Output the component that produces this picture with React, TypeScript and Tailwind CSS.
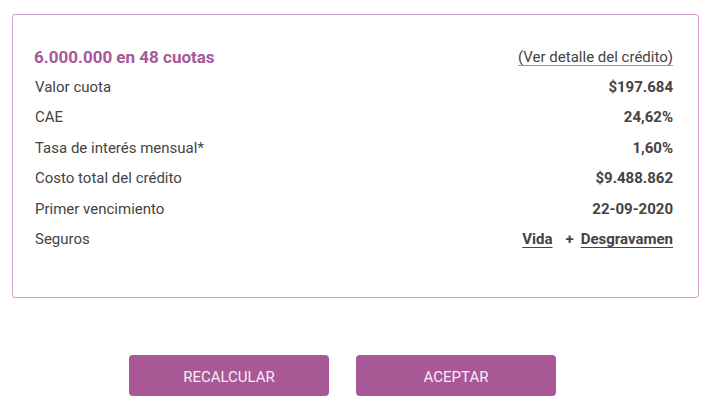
const ROWS: [string, string][] = [
  ['Valor cuota', '$197.684'],
  ['CAE', '24,62%'],
  ['Tasa de interés mensual*', '1,60%'],
  ['Costo total del crédito', '$9.488.862'],
  ['Primer vencimiento', '22-09-2020'],
]

export default function App() {
  return (
    <div className="w-[711px] h-[407px] bg-white font-['Roboto',sans-serif] text-[#444]">
      <div className="pt-[14px] pl-[12px]">
        <div className="w-[687px] h-[284px] border border-[#d59fcf] rounded-[3px] pt-[28px] pl-[21px] pr-[25px]">
          <div className="flex items-center justify-between h-[30px]">
            <span className="text-[17px] font-bold text-[#a8579a]">6.000.000 en 48 cuotas</span>
            <a className="text-[15px] underline underline-offset-[3px] decoration-[#999] -mt-px">
              (Ver detalle del crédito)
            </a>
          </div>
          <div className="-mt-px">
            {ROWS.map(([label, value]) => (
              <div key={label} className="flex items-center justify-between h-[30.4px] text-[15px] pl-px">
                <span>{label}</span>
                <span className="font-bold">{value}</span>
              </div>
            ))}
            <div className="flex items-center justify-between h-[30.4px] text-[15px] pl-px">
              <span>Seguros</span>
              <span className="font-bold flex items-center">
                <a className="underline underline-offset-[3px]">Vida</a>
                <span className="ml-[13px] mr-[7px]">+</span>
                <a className="underline underline-offset-[3px]">Desgravamen</a>
              </span>
            </div>
          </div>
        </div>
      </div>
      <div className="flex gap-[27px] pl-[129px] pt-[57px]">
        <button className="w-[200px] h-[41px] rounded-[4px] bg-[#a95896] text-[#f6ecf4] text-[15px] pt-[3px]">
          RECALCULAR
        </button>
        <button className="w-[200px] h-[41px] rounded-[4px] bg-[#a95896] text-[#f6ecf4] text-[15px] pt-[3px]">
          ACEPTAR
        </button>
      </div>
    </div>
  )
}
